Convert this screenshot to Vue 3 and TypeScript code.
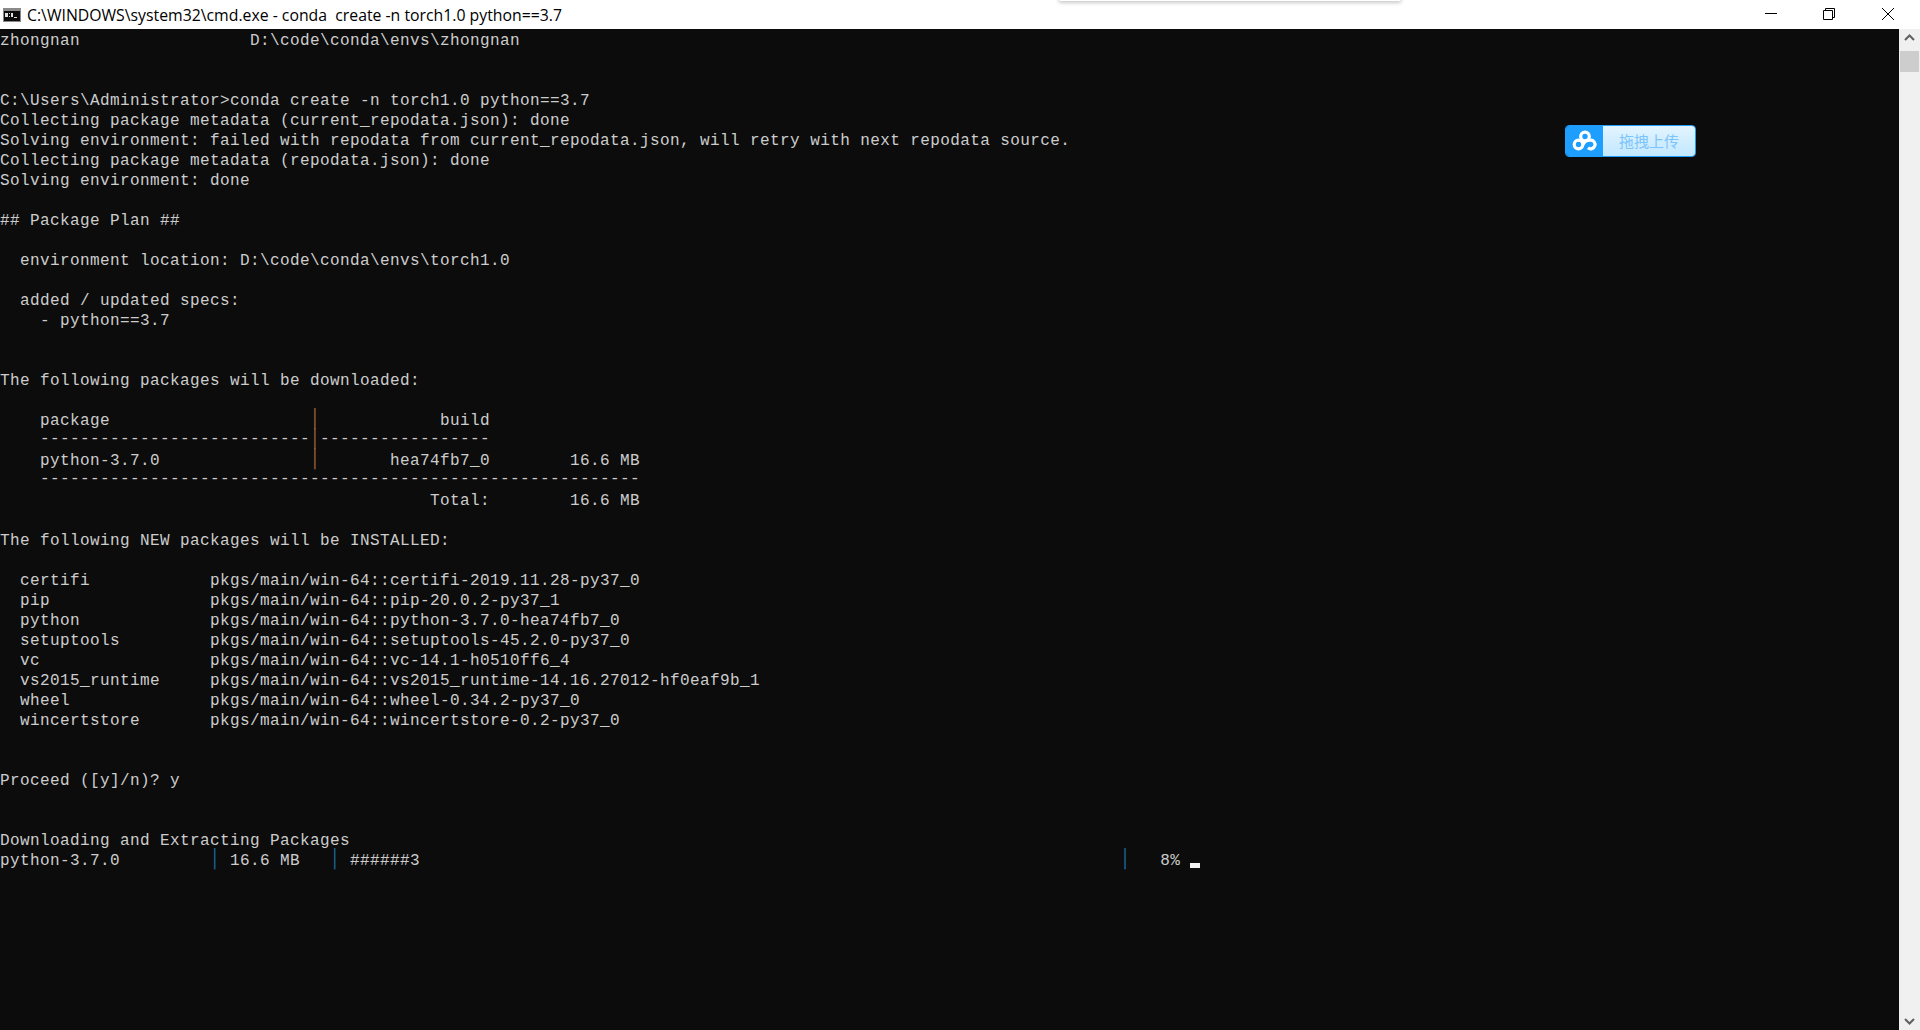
<script setup lang="ts">
const before: string[] = [
  'zhongnan                 D:\\code\\conda\\envs\\zhongnan',
  '',
  '',
  'C:\\Users\\Administrator>conda create -n torch1.0 python==3.7',
  'Collecting package metadata (current_repodata.json): done',
  'Solving environment: failed with repodata from current_repodata.json, will retry with next repodata source.',
  'Collecting package metadata (repodata.json): done',
  'Solving environment: done',
  '',
  '## Package Plan ##',
  '',
  '  environment location: D:\\code\\conda\\envs\\torch1.0',
  '',
  '  added / updated specs:',
  '    - python==3.7',
  '',
  '',
  'The following packages will be downloaded:',
  '',
]
const table = [
  { left: '    package                    ', right: '            build', rule: false },
  { left: '    ---------------------------', right: '-----------------', rule: true },
  { left: '    python-3.7.0               ', right: '       hea74fb7_0        16.6 MB', rule: false },
]
const fullRule = '    ' + '-'.repeat(60)
const after: string[] = [
  '                                           Total:        16.6 MB',
  '',
  'The following NEW packages will be INSTALLED:',
  '',
  '  certifi            pkgs/main/win-64::certifi-2019.11.28-py37_0',
  '  pip                pkgs/main/win-64::pip-20.0.2-py37_1',
  '  python             pkgs/main/win-64::python-3.7.0-hea74fb7_0',
  '  setuptools         pkgs/main/win-64::setuptools-45.2.0-py37_0',
  '  vc                 pkgs/main/win-64::vc-14.1-h0510ff6_4',
  '  vs2015_runtime     pkgs/main/win-64::vs2015_runtime-14.16.27012-hf0eaf9b_1',
  '  wheel              pkgs/main/win-64::wheel-0.34.2-py37_0',
  '  wincertstore       pkgs/main/win-64::wincertstore-0.2-py37_0',
  '',
  '',
  'Proceed ([y]/n)? y',
  '',
  '',
  'Downloading and Extracting Packages',
]
const progress = ['python-3.7.0         ', ' 16.6 MB   ', ' ######3' + ' '.repeat(70), '   8% ']
</script>

<template>
  <div class="window">
    <header class="titlebar">
      <div class="title-left">
        <svg class="cmd-icon" width="18" height="14" viewBox="0 0 18 14">
          <rect x="0" y="0" width="18" height="14" fill="#8a8a8a" />
          <rect x="1" y="3" width="16" height="10" fill="#0c0c0c" />
          <rect x="2" y="5" width="3" height="4" fill="#e0e0e0" />
          <rect x="6" y="5" width="1" height="1" fill="#e0e0e0" />
          <rect x="6" y="8" width="1" height="1" fill="#e0e0e0" />
          <rect x="8" y="5" width="2" height="4" fill="#e0e0e0" />
          <rect x="11" y="9" width="3" height="1" fill="#e0e0e0" />
        </svg>
        <span class="title-text">C:\WINDOWS\system32\cmd.exe - conda&nbsp; create -n torch1.0 python==3.7</span>
      </div>
      <div class="controls">
        <button class="ctl">
          <svg width="12" height="12" viewBox="0 0 12 12"><path d="M0 5.500H12" stroke="#000" fill="none" /></svg>
        </button>
        <button class="ctl">
          <svg width="12" height="12" viewBox="0 0 12 12"><path d="M.5 2.500h9v9h-9zM2.500 2.500v-2h9v9h-2" stroke="#000" fill="none" /></svg>
        </button>
        <button class="ctl close">
          <svg width="12" height="12" viewBox="0 0 12 12"><path d="M0 0L12 12M12 0L0 12" stroke="#000" fill="none" /></svg>
        </button>
      </div>
    </header>
    <div class="top-shadow"></div>

    <div class="body">
      <main class="console">
        <div v-for="(l, i) in before" :key="'b' + i" class="line">{{ l }}</div>
        <div v-for="(t, i) in table" :key="'t' + i" class="line"><span :class="{ rule: t.rule }">{{ t.left }}</span><span class="bar amber">│</span><span :class="{ rule: t.rule }">{{ t.right }}</span></div>
        <div class="line"><span class="rule">{{ fullRule }}</span></div>
        <div v-for="(l, i) in after" :key="'a' + i" class="line">{{ l }}</div>
        <div class="line">{{ progress[0] }}<span class="bar">│</span>{{ progress[1] }}<span class="bar">│</span>{{ progress[2] }}<span class="bar">│</span>{{ progress[3] }}<span class="cursor"></span></div>
      </main>

      <aside class="scrollbar">
        <svg width="19" height="17" viewBox="0 0 19 17"><path d="M5 11l4.500-4.500L14 11" stroke="#606060" stroke-width="2" fill="none" /></svg>
        <div class="thumb"></div>
        <div class="track"></div>
        <svg width="19" height="17" viewBox="0 0 19 17"><path d="M5 6l4.500 4.500L14 6" stroke="#606060" stroke-width="2" fill="none" /></svg>
      </aside>
    </div>

    <div class="badge">
      <div class="badge-icon">
        <svg width="26" height="22" viewBox="0 0 26 22">
          <g fill="none" stroke="#fff" stroke-width="3.200">
            <circle cx="13" cy="6.500" r="4.300" />
            <circle cx="6.500" cy="14.500" r="4.300" />
            <path d="M11 14.500c2-4 5-4.500 7.500-4.300a4.300 4.300 0 1 1-2.500 7.600" />
          </g>
        </svg>
      </div>
      <div class="badge-text">拖拽上传</div>
    </div>
  </div>
</template>

<style scoped>
.window {
  position: relative;
  width: 1920px;
  height: 1030px;
  display: flex;
  flex-direction: column;
  overflow: hidden;
  background: #0c0c0c;
}
.titlebar {
  height: 29px;
  flex: none;
  background: #fff;
  display: flex;
  justify-content: space-between;
  align-items: flex-start;
}
.title-left {
  display: flex;
  align-items: center;
  gap: 6px;
  height: 29px;
  padding-left: 3px;
}
.cmd-icon { display: block; }
.title-text {
  font-family: "Open Sans", "Liberation Sans", sans-serif;
  font-size: 15.800px;
  color: #000;
  white-space: pre;
}
.controls {
  display: flex;
  gap: 46px;
  padding: 8px 26px 0 0;
}
.ctl {
  width: 12px;
  height: 12px;
  padding: 0;
  border: 0;
  background: none;
  display: block;
}
.ctl.close { margin-left: 1px; }
.ctl svg { display: block; }
.top-shadow {
  position: absolute;
  left: 1060px;
  top: 0;
  width: 340px;
  height: 1px;
  box-shadow: 0 0 4px 1px rgba(0, 0, 0, 0.35);
}
.body {
  flex: 1;
  min-height: 0;
  display: flex;
}
.console {
  flex: 1;
  min-width: 0;
  padding-top: 2px;
  font-family: "Liberation Mono", "DejaVu Sans Mono", monospace;
  font-size: 16px;
  letter-spacing: 0.4px;
  line-height: 20px;
  color: #cccccc;
}
.line {
  height: 20px;
  white-space: pre;
}
.rule {
  display: inline-block;
  transform: translateY(-2px);
}
.bar {
  display: inline-block;
  width: 10px;
  height: 20px;
  vertical-align: top;
  color: #1a6ea0;
  font-family: "DejaVu Sans Mono", monospace;
  letter-spacing: 0;
  transform: translateY(-2px) scaleY(1.120);
}
.bar.amber { color: #a0643a; }
.cursor {
  display: inline-block;
  width: 10px;
  height: 5px;
  background: #f2f2f2;
  vertical-align: -3px;
}
.scrollbar {
  width: 21px;
  flex: none;
  background: #f0f0f0;
  display: flex;
  flex-direction: column;
  align-items: center;
}
.thumb {
  width: 19px;
  height: 21px;
  margin-top: 5px;
  background: #cdcdcd;
}
.track { flex: 1; }
.badge {
  position: absolute;
  left: 1565px;
  top: 125px;
  width: 131px;
  height: 32px;
  box-sizing: border-box;
  border: 1px solid #1e9fff;
  border-radius: 4px;
  overflow: hidden;
  display: flex;
}
.badge-icon {
  width: 37px;
  flex: none;
  background: #1e9fff;
  display: flex;
  align-items: center;
  justify-content: center;
}
.badge-text {
  flex: 1;
  background: linear-gradient(#e2f4ff, #c2e8ff);
  color: #7cc4fb;
  font-family: "Noto Sans CJK SC", sans-serif;
  font-size: 15px;
  line-height: 30px;
  text-align: center;
}
</style>
